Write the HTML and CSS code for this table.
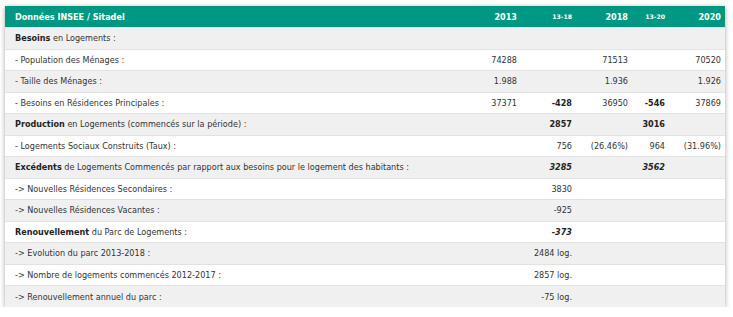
FILE: index.html
```html
<!DOCTYPE html>
<html lang="fr">
<head>
<meta charset="utf-8">
<title>Données INSEE / Sitadel</title>
<link rel="stylesheet" href="styles.css">
</head>
<body>
<table class="data">
  <colgroup>
    <col class="c-label"><col class="c-y1"><col class="c-var"><col class="c-year"><col class="c-var2"><col class="c-year">
  </colgroup>
  <thead>
    <tr>
      <th class="lbl">Données INSEE / Sitadel</th>
      <th>2013</th>
      <th class="small">13-18</th>
      <th>2018</th>
      <th class="small">13-20</th>
      <th>2020</th>
    </tr>
  </thead>
  <tbody>
    <tr><td class="lbl"><b>Besoins</b> en Logements :</td><td></td><td></td><td></td><td></td><td></td></tr>
    <tr><td class="lbl">- Population des Ménages :</td><td>74288</td><td></td><td>71513</td><td></td><td>70520</td></tr>
    <tr><td class="lbl">- Taille des Ménages :</td><td>1.988</td><td></td><td>1.936</td><td></td><td>1.926</td></tr>
    <tr><td class="lbl">- Besoins en Résidences Principales :</td><td>37371</td><td><b>-428</b></td><td>36950</td><td><b>-546</b></td><td>37869</td></tr>
    <tr><td class="lbl"><b>Production</b> en Logements (commencés sur la période) :</td><td></td><td><b>2857</b></td><td></td><td><b>3016</b></td><td></td></tr>
    <tr><td class="lbl">- Logements Sociaux Construits (Taux) :</td><td></td><td>756</td><td>(26.46%)</td><td>964</td><td>(31.96%)</td></tr>
    <tr><td class="lbl" colspan="2"><b>Excédents</b> de Logements Commencés par rapport aux besoins pour le logement des habitants :</td><td><b><i>3285</i></b></td><td></td><td><b><i>3562</i></b></td><td></td></tr>
    <tr><td class="lbl">-&gt; Nouvelles Résidences Secondaires :</td><td></td><td>3830</td><td></td><td></td><td></td></tr>
    <tr><td class="lbl">-&gt; Nouvelles Résidences Vacantes :</td><td></td><td>-925</td><td></td><td></td><td></td></tr>
    <tr><td class="lbl"><b>Renouvellement</b> du Parc de Logements :</td><td></td><td><b><i>-373</i></b></td><td></td><td></td><td></td></tr>
    <tr><td class="lbl">-&gt; Evolution du parc 2013-2018 :</td><td colspan="2">2484 log.</td><td></td><td></td><td></td></tr>
    <tr><td class="lbl">-&gt; Nombre de logements commencés 2012-2017 :</td><td colspan="2">2857 log.</td><td></td><td></td><td></td></tr>
    <tr><td class="lbl">-&gt; Renouvellement annuel du parc :</td><td colspan="2">-75 log.</td><td></td><td></td><td></td></tr>
  </tbody>
</table>
</body>
</html>
```
FILE: styles.css
```css
html, body {
  margin: 0;
  padding: 0;
  background: #ffffff;
}
body {
  padding: 6px 0 0 5px;
  font-family: "DejaVu Sans", Verdana, sans-serif;
  font-size: 8.1px;
  color: #333333;
}
.data {
  width: 720px;
  border-collapse: collapse;
  table-layout: fixed;
  box-shadow: 0 1px 5px rgba(0, 0, 0, 0.35);
}
.c-y1 { width: 55px; }
.c-var { width: 55px; }
.c-year { width: 56px; }
.c-var2 { width: 37px; }
.data th {
  background: #009882;
  color: #ffffff;
  font-weight: bold;
  font-size: 8.1px;
  height: 21px;
  padding: 0 4px 0 0;
  text-align: right;
  white-space: nowrap;
}
.data th.small {
  font-size: 6.2px;
}
.data th.lbl, .data td.lbl {
  text-align: left;
  padding-left: 10px;
}
.data td {
  height: 21.5px;
  padding: 0 4px 0 0;
  text-align: right;
  white-space: nowrap;
  border-top: 1px solid #e2e2e2;
  box-sizing: border-box;
  vertical-align: middle;
}
.data tbody tr:nth-child(odd) td { background: #f0f0f0; }
.data tbody tr:nth-child(even) td { background: #ffffff; }
.data b { color: #222222; }
```
